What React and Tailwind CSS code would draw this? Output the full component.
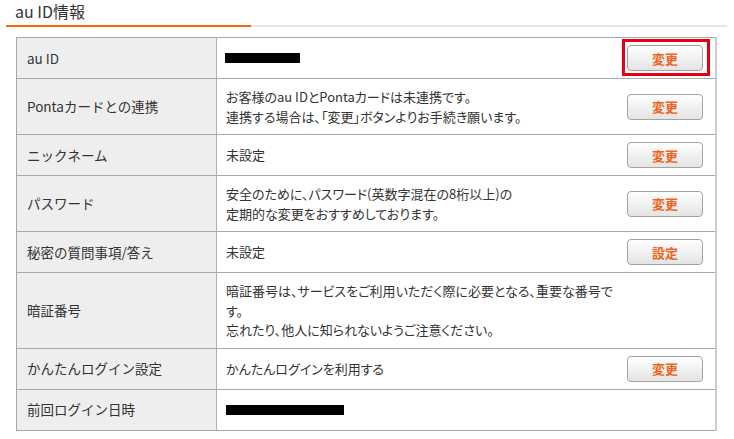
import React from "react";

const font = { fontFamily: '"Noto Sans CJK JP", "Noto Sans", sans-serif' };

function Btn({ label, highlight }) {
  return (
    <div className="relative shrink-0">
      {highlight && (
        <span className="absolute left-[-5px] top-[-6px] right-[-7px] bottom-[-5px] border-[3px] border-[#e50012] pointer-events-none" />
      )}
      <button className="w-[76px] h-[26px] rounded-[4px] border border-[#a3a3a3] bg-gradient-to-b from-white to-[#e4e4e4] text-[13px] font-bold leading-none text-[#f0641e] shadow-[inset_0_1px_0_#fff]">
        {label}
      </button>
    </div>
  );
}

function Row({ label, children, button, highlight, last }) {
  return (
    <div className={"flex border-b border-[#a8a8a8]"}>
      <div className="w-[200px] shrink-0 bg-[#eeeeee] border-r border-[#b0b0b0] flex items-center pl-[10px] text-[13.5px] text-[#333]">
        {label}
      </div>
      <div className="flex-1 min-h-[40px] flex items-center justify-between pl-[9px] pr-[12px]">
        <div className="py-[8px] leading-[19.5px] text-[13px] text-[#333] whitespace-nowrap [font-feature-settings:'palt']">
          {children}
        </div>
        {button && <Btn label={button} highlight={highlight} />}
      </div>
    </div>
  );
}

export default function App() {
  return (
    <div className="w-[734px] h-[439px] bg-white overflow-hidden" style={font}>
      <div className="ml-[6px] w-[721px]">
        <div className="h-[25px] pl-[9px] text-[16px] leading-[23px] text-[#333]">au ID情報</div>
        <div className="flex h-[2px]">
          <div className="w-[245px] bg-[#f86510]" />
          <div className="flex-1 bg-[#e6e6e6]" />
        </div>
      </div>
      <div className="mt-[10px] ml-[16px] w-[701px] border-t border-l border-[#a8a8a8] border-r-2 border-r-[#cccccc]">
        <Row label="au ID" button="変更" highlight>
          <span className="block w-[75px] h-[10px] bg-black -ml-[1px]" />
        </Row>
        <Row label="Pontaカードとの連携" button="変更">
          お客様のau IDとPontaカードは未連携です。
          <br />
          連携する場合は、「変更」ボタンよりお手続き願います。
        </Row>
        <Row label="ニックネーム" button="変更">
          未設定
        </Row>
        <Row label="パスワード" button="変更">
          安全のために、パスワード(英数字混在の8桁以上)の
          <br />
          定期的な変更をおすすめしております。
        </Row>
        <Row label="秘密の質問事項/答え" button="設定">
          未設定
        </Row>
        <Row label="暗証番号">
          暗証番号は、サービスをご利用いただく際に必要となる、重要な番号で
          <br />
          す。
          <br />
          忘れたり、他人に知られないようご注意ください。
        </Row>
        <Row label="かんたんログイン設定" button="変更">
          かんたんログインを利用する
        </Row>
        <Row label="前回ログイン日時">
          <span className="block w-[118px] h-[10px] bg-black" />
        </Row>
      </div>
    </div>
  );
}
